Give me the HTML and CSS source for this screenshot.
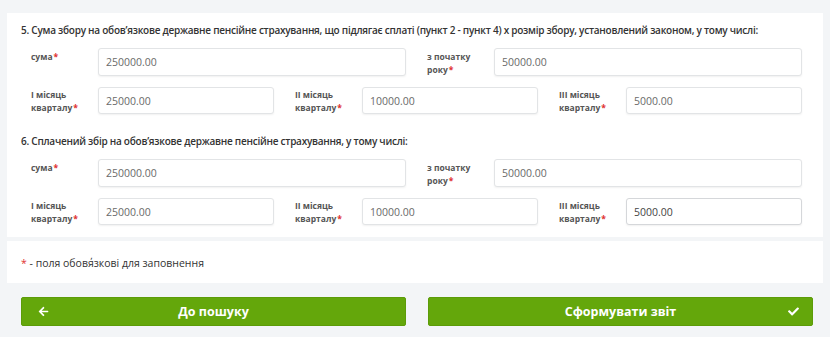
FILE: index.html
```html
<!DOCTYPE html>
<html lang="uk">
<head>
<meta charset="UTF-8">
<title>Звіт</title>
<link rel="stylesheet" href="styles.css">
</head>
<body>

<div class="panel">
    <h4>5. Сума збору на обов’язкове державне пенсійне страхування, що підлягає сплаті (пункт 2 - пункт 4) х розмір збору, установлений законом, у тому числі:</h4>
    <div class="row halves">
        <div class="field"><label>сума<span class="req">*</span></label><input type="text" value="250000.00"></div>
        <div class="field"><label>з початку<br>року<span class="req">*</span></label><input type="text" value="50000.00"></div>
    </div>
    <div class="row thirds">
        <div class="field"><label>І місяць<br>кварталу<span class="req">*</span></label><input type="text" value="25000.00"></div>
        <div class="field"><label>ІІ місяць<br>кварталу<span class="req">*</span></label><input type="text" value="10000.00"></div>
        <div class="field"><label>ІІІ місяць<br>кварталу<span class="req">*</span></label><input type="text" value="5000.00"></div>
    </div>

    <h4 class="second">6. Сплачений збір на обов’язкове державне пенсійне страхування, у тому числі:</h4>
    <div class="row halves">
        <div class="field"><label>сума<span class="req">*</span></label><input type="text" value="250000.00"></div>
        <div class="field"><label>з початку<br>року<span class="req">*</span></label><input type="text" value="50000.00"></div>
    </div>
    <div class="row thirds">
        <div class="field"><label>І місяць<br>кварталу<span class="req">*</span></label><input type="text" value="25000.00"></div>
        <div class="field"><label>ІІ місяць<br>кварталу<span class="req">*</span></label><input type="text" value="10000.00"></div>
        <div class="field"><label>ІІІ місяць<br>кварталу<span class="req">*</span></label><input type="text" class="active" value="5000.00"></div>
    </div>
</div>

<div class="panel note">
    <span class="req">*</span> - поля обов΄язкові для заповнення
</div>

<div class="buttons">
    <button type="button" class="btn">
        <svg class="icon left" viewBox="0 0 448 512" width="11" height="11"><path fill="#fff" d="M257.5 445.1l-22.2 22.2c-9.4 9.4-24.6 9.4-33.9 0L7 273c-9.4-9.4-9.4-24.6 0-33.9L201.4 44.7c9.4-9.4 24.6-9.4 33.9 0l22.2 22.2c9.5 9.5 9.3 25-.4 34.3L136.6 216H424c13.3 0 24 10.7 24 24v32c0 13.3-10.7 24-24 24H136.6l120.5 114.8c9.8 9.3 10 24.8.4 34.3z"/></svg>
        До пошуку
    </button>
    <button type="submit" class="btn">
        Сформувати звіт
        <svg class="icon right" viewBox="0 0 512 512" width="11" height="11"><path fill="#fff" d="M173.9 439.4l-166.4-166.4c-10-10-10-26.2 0-36.2l36.2-36.2c10-10 26.2-10 36.2 0L192 312.7 432.1 72.6c10-10 26.2-10 36.2 0l36.2 36.2c10 10 10 26.2 0 36.2l-294.4 294.4c-10 10-26.2 10-36.2 0z"/></svg>
    </button>
</div>

</body>
</html>
```

FILE: styles.css
```css
body { margin: 0; font-family: "Open Sans", Arial, sans-serif; color: #333; background-color: #f3f5f7; height: 337px; overflow: hidden; }
.panel { background-color: #fff; margin: 13px 7px 0 7px; padding: 10px 14px 12px; }
h4 { margin: 0 0 11px; font-size: 10px; line-height: 14px; font-weight: 600; color: #333; letter-spacing: -0.25px; white-space: nowrap; }
h4.second { margin-top: 20px; margin-bottom: 11px; }
.row { display: grid; gap: 21px; padding: 0 7px 0 10px; }
.halves { grid-template-columns: 1fr 1fr; margin-bottom: 11px; }
.halves input { height: 28px; }
.thirds { grid-template-columns: 1fr 1fr 1fr; }
.thirds input { height: 27px; }
.field { display: flex; align-items: flex-start; }
label { width: 67px; flex: none; font-size: 8.5px; line-height: 13px; font-weight: 700; color: #555; padding-top: 2px; padding-right: 8px; box-sizing: border-box; }
label .req { margin-left: 1px; }
.thirds label { padding-top: 1px; }
.req { color: #e0302f; }
input { flex: 1; min-width: 0; box-sizing: border-box; border: 1px solid #e2e4e6; border-radius: 3px; padding: 0 7px; font-family: "Open Sans", Arial, sans-serif; font-size: 10.5px; color: #6a6a6a; box-shadow: 0 1px 2px rgba(0,0,0,0.06); outline: none; }
input.active { border-color: #d5d7da; color: #444; }
.note { margin-top: 4px; padding: 15px 14px 13px; font-size: 10.5px; line-height: 14px; color: #333; }
.buttons { display: grid; grid-template-columns: 1fr 1fr; gap: 22px; margin: 14px 17px 0 21px; }
.btn { position: relative; height: 29px; border: 1px solid #5c9c08; border-radius: 2px; background-color: #64a70b; color: #fff; font-family: "Open Sans", Arial, sans-serif; font-size: 12.5px; font-weight: 700; cursor: pointer; }
.icon { position: absolute; top: 8px; }
.icon.left { left: 16px; }
.icon.right { right: 13px; }
```
